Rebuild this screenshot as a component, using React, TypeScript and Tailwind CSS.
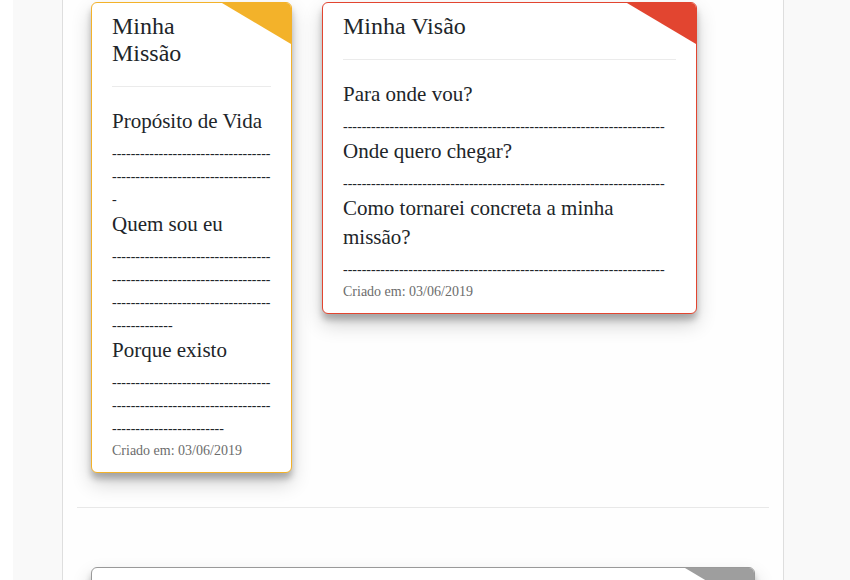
import React from 'react';

type Field = { label: string; dashes: number };

function Card({
  title,
  fields,
  width,
  border,
  corner,
}: {
  title: string;
  fields: Field[];
  width: string;
  border: string;
  corner: string;
}) {
  return (
    <div
      className={`relative overflow-hidden rounded-[6px] border bg-white px-5 pt-[10px] pb-[11px] shadow-[0_10px_20px_rgba(0,0,0,0.19),0_6px_6px_rgba(0,0,0,0.23)] ${width} ${border}`}
    >
      {/* canto colorido */}
      <div className={`absolute top-0 right-0 h-0 w-0 border-t-[41px] border-l-[69px] border-l-transparent ${corner}`} />

      <h3 className="pr-[70px] text-[24px] leading-[27px] text-[#212529]">{title}</h3>
      <div className="mt-[19px] h-px bg-[#ebebeb]" />

      <div className="mt-5">
        {fields.map((f) => (
          <div key={f.label}>
            <p className="text-[21px] leading-[29px] text-[#212529]">{f.label}</p>
            <p className="mt-[6px] -mb-px break-all text-[14px] leading-[23px] text-[#212529]">{'-'.repeat(f.dashes)}</p>
          </div>
        ))}
      </div>

      <p className="mt-[2px] text-[14px] leading-[20px] text-[#6c6c6c]">Criado em: 03/06/2019</p>
    </div>
  );
}

export default function App() {
  return (
    <div className="min-h-[580px] bg-white pl-[13px] font-['Liberation_Serif',serif]">
      <div className="min-h-[580px] bg-[#f9f9f9] pl-[49px]">
        <div className="min-h-[580px] w-[722px] border-x border-[#dedede] bg-[#fefefe]">
          {/* cartões */}
          <div className="flex items-start gap-[30px] pt-[2px] pl-[28px]">
            <Card
              title="Minha Missão"
              width="w-[201px]"
              border="border-[#f3b22a]"
              corner="border-t-[#f3b22a]"
              fields={[
                { label: 'Propósito de Vida', dashes: 69 },
                { label: 'Quem sou eu', dashes: 115 },
                { label: 'Porque existo', dashes: 92 },
              ]}
            />
            <Card
              title="Minha Visão"
              width="w-[375px]"
              border="border-[#e24530]"
              corner="border-t-[#e24530]"
              fields={[
                { label: 'Para onde vou?', dashes: 69 },
                { label: 'Onde quero chegar?', dashes: 69 },
                { label: 'Como tornarei concreta a minha missão?', dashes: 69 },
              ]}
            />
          </div>

          <div className="mx-[14px] mt-[34px] h-px bg-[#e8e8e8]" />

          {/* próximo cartão */}
          <div className="mx-[28px] mt-[59px] pb-10">
            <div className="relative h-[120px] overflow-hidden rounded-[6px] border border-[#999999] bg-white shadow-[0_10px_20px_rgba(0,0,0,0.19),0_6px_6px_rgba(0,0,0,0.23)]">
              <div className="absolute top-0 right-0 h-0 w-0 border-t-[41px] border-l-[69px] border-l-transparent border-t-[#9e9e9e]" />
            </div>
          </div>
        </div>
      </div>
    </div>
  );
}
